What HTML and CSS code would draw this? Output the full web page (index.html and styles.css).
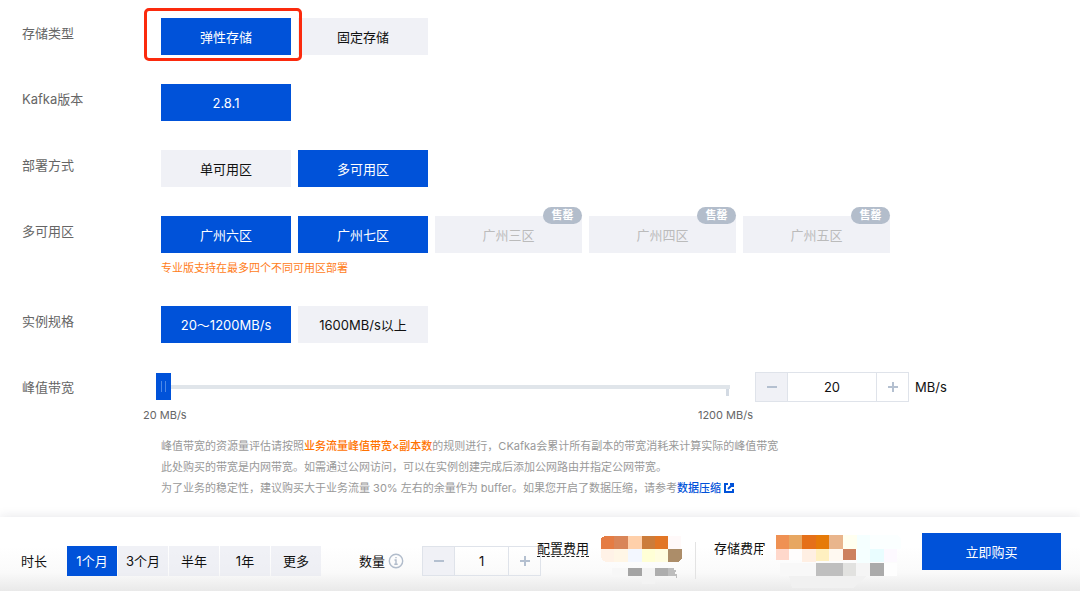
FILE: index.html
```html
<!DOCTYPE html>
<html lang="zh-CN">
<head>
<meta charset="utf-8">
<meta name="viewport" content="width=device-width, initial-scale=1">
<title>CKafka 购买</title>
<link rel="stylesheet" href="styles.css">
</head>
<body>
<main class="form">
  <section class="row">
    <h2 class="row-label">存储类型</h2>
    <div class="options">
      <button type="button" class="option selected highlighted">弹性存储</button>
      <button type="button" class="option">固定存储</button>
    </div>
  </section>
  <section class="row">
    <h2 class="row-label">Kafka版本</h2>
    <div class="options">
      <button type="button" class="option selected">2.8.1</button>
    </div>
  </section>
  <section class="row">
    <h2 class="row-label">部署方式</h2>
    <div class="options">
      <button type="button" class="option">单可用区</button>
      <button type="button" class="option selected">多可用区</button>
    </div>
  </section>
  <section class="row">
    <h2 class="row-label">多可用区</h2>
    <div>
      <div class="options">
        <button type="button" class="option selected">广州六区</button>
        <button type="button" class="option selected">广州七区</button>
        <button type="button" class="option soldout" disabled>广州三区<span class="badge">售罄</span></button>
        <button type="button" class="option soldout" disabled>广州四区<span class="badge">售罄</span></button>
        <button type="button" class="option soldout" disabled>广州五区<span class="badge">售罄</span></button>
      </div>
      <p class="hint">专业版支持在最多四个不同可用区部署</p>
    </div>
  </section>
  <section class="row">
    <h2 class="row-label">实例规格</h2>
    <div class="options">
      <button type="button" class="option selected">20～1200MB/s</button>
      <button type="button" class="option">1600MB/s以上</button>
    </div>
  </section>
  <section class="row">
    <label class="row-label" for="bandwidth">峰值带宽</label>
    <div>
      <div class="bandwidth">
        <div class="slider">
          <input id="bandwidth" class="range" type="range" min="20" max="1200" value="20">
          <div class="scale"><span>20 MB/s</span><span>1200 MB/s</span></div>
        </div>
        <div class="stepper">
          <button type="button" class="step off" aria-label="减少带宽"><svg width="12" height="12" viewBox="0 0 12 12"><path d="M1 6h10"/></svg></button>
          <input class="value" type="text" value="20" aria-label="峰值带宽">
          <button type="button" class="step" aria-label="增加带宽"><svg width="12" height="12" viewBox="0 0 12 12"><path d="M1 6h10M6 1v10"/></svg></button>
        </div>
        <span class="unit">MB/s</span>
      </div>
      <div class="notes">
        <p>峰值带宽的资源量评估请按照<strong>业务流量峰值带宽×副本数</strong>的规则进行，CKafka会累计所有副本的带宽消耗来计算实际的峰值带宽</p>
        <p>此处购买的带宽是内网带宽。如需通过公网访问，可以在实例创建完成后添加公网路由并指定公网带宽。</p>
        <p>为了业务的稳定性，建议购买大于业务流量 30% 左右的余量作为 buffer。如果您开启了数据压缩，请参考<a href="#">数据压缩<svg class="external" width="10" height="10" viewBox="0 0 10 10"><path d="M4 1H1v8h8V6M6 1h3v3M9 1L4 6"/></svg></a></p>
      </div>
    </div>
  </section>
</main>
<footer class="bar">
  <div class="group">
    <span class="bar-label">时长</span>
    <div class="periods">
      <button type="button" class="period selected">1个月</button>
      <button type="button" class="period">3个月</button>
      <button type="button" class="period">半年</button>
      <button type="button" class="period">1年</button>
      <button type="button" class="period">更多</button>
    </div>
  </div>
  <div class="group quantity">
    <label class="bar-label" for="count">数量</label>
    <svg class="info" width="16" height="16" viewBox="0 0 16 16"><circle cx="8" cy="8" r="6.7"/><path d="M6.5 7H8v4M6.3 11.2h3.4M7.3 4.6h1.4"/></svg>
    <div class="stepper small">
      <button type="button" class="step off" aria-label="减少数量"><svg width="12" height="12" viewBox="0 0 12 12"><path d="M1 6h10"/></svg></button>
      <input id="count" class="value" type="text" value="1">
      <button type="button" class="step" aria-label="增加数量"><svg width="12" height="12" viewBox="0 0 12 12"><path d="M1 6h10M6 1v10"/></svg></button>
    </div>
  </div>
  <div class="fee config">
    <span class="fee-label dashed">配置费用</span>
    <svg class="mosaic" width="84" height="50" viewBox="0 0 84 50" shape-rendering="crispEdges">
      <path fill="#e57c43" d="M1 14V6q0-5 5-5h8v13z"/>
      <path fill="#d98558" d="M14 1h14v13H14z"/>
      <path fill="#ffd0aa" d="M28 1h14v13H28z"/>
      <path fill="#cc7c3a" d="M42 1h13v13H42z"/>
      <path fill="#e27625" d="M55 1h13v13H55z"/>
      <path fill="#fff9f9" d="M68 1h13v13H68z"/>
      <path fill="#fff2e7" d="M1 14h13v13H6q-5-2-5-6z"/>
      <path fill="#fff6e6" d="M14 14h14v13H14z"/>
      <path fill="#f3f7ff" d="M28 14h14v13H28z"/>
      <path fill="#ffffd6" d="M42 14h13v13H42z"/>
      <path fill="#fffde0" d="M55 14h13v13H55z"/>
      <path fill="#ac8d69" d="M68 14h14v7q0 6-6 6h-8z"/>
      <path fill="#f7f7f7" d="M12 33h16v9H12z"/>
      <path fill="#f3f3f3" d="M42 33h13v16H42z"/>
      <path fill="#a4a4a4" d="M28 33h14v8H28z"/>
      <path fill="#adadad" d="M55 33h13v8H55z"/>
      <path fill="#bdbdbd" d="M68 33h6v2h2v2h-1v2h2v4h-1v-2h-8z"/>
    </svg>
  </div>
  <div class="fee storage">
    <span class="fee-label cut">存储费用</span>
    <svg class="mosaic" width="130" height="54" viewBox="0 0 130 54" shape-rendering="crispEdges">
      <path fill="#ef9153" d="M1 0h13v14H1z"/>
      <path fill="#e7a762" d="M14 0h13v14H14z"/>
      <path fill="#e57019" d="M27 0h14v14H27z"/>
      <path fill="#e67a08" d="M41 0h13v14H41z"/>
      <path fill="#e9b58c" d="M54 0h14v14H54z"/>
      <path fill="#fffff0" d="M68 0h14v14H68z"/>
      <path fill="#f5ffff" d="M82 0h13v28H82z"/>
      <path fill="#fbffff" d="M95 0h25q6 0 6 6v8H95z"/>
      <path fill="#ffd8cb" d="M1 14h13v11H1z"/>
      <path fill="#fffdfd" d="M14 14h13v11H14z"/>
      <path fill="#ffefe3" d="M27 14h14v13H27z"/>
      <path fill="#fff0c0" d="M41 14h13v12H41z"/>
      <path fill="#fff9f1" d="M54 14h14v12H54z"/>
      <path fill="#cd815f" d="M68 14h13v11H68z"/>
      <path fill="#e9fdff" d="M95 14h14v13H95z"/>
      <path fill="#fdf9ff" d="M109 14h13v13h-13z"/>
      <path fill="#f8f8f8" d="M5 28h36v13H5z"/>
      <path fill="#bfbfbf" d="M41 28h27v13H41z"/>
      <path fill="#e2e2e0" d="M68 28h13v13H68z"/>
      <path fill="#f5f5f5" d="M81 28h14v13H81z"/>
      <path fill="#f1f1f1" d="M14 41h78l-14 12H17z"/>
      <path fill="#ababab" d="M95 28h14v13H95z"/>
      <path fill="#fefefe" d="M109 28h13v13h-13z"/>
    </svg>
  </div>
  <button type="button" class="buy">立即购买</button>
</footer>
</body>
</html>
```
FILE: styles.css
```css
* {
  box-sizing: border-box;
}

body {
  margin: 0;
  min-height: 100vh;
  display: flex;
  flex-direction: column;
  background: #fff;
  color: #111;
  font: 13px/18px Inter, "Noto Sans CJK SC", sans-serif;
}

button,
input {
  margin: 0;
  padding: 0;
  border: 0;
  border-radius: 0;
  font: inherit;
  color: inherit;
}

h2,
p {
  margin: 0;
}

.form {
  flex: 1;
  display: flex;
  flex-direction: column;
  gap: 29px;
  padding: 18px 19px 17px 22px;
}

.row {
  display: grid;
  grid-template-columns: 139px 1fr;
}

.row-label {
  font-size: 13px;
  font-weight: 400;
  line-height: 30px;
  color: #666;
}

.options {
  display: flex;
  gap: 7px;
}

.option {
  position: relative;
  width: 130px;
  height: 37px;
  padding-top: 1px;
  background: #f0f1f6;
}

.selected {
  background: #0052d9;
  color: #fff;
}

.highlighted {
  z-index: 1;
}

.highlighted::after {
  content: "";
  position: absolute;
  inset: -10px -11px -6px -17px;
  border: 3px solid #fb2a0d;
  border-radius: 5px;
}

.soldout {
  width: 147px;
  color: #bbb;
}

.badge {
  position: absolute;
  top: -9px;
  right: 0;
  width: 39px;
  border-radius: 9px;
  background: #b3bdcb;
  color: #fff;
  font-size: 11px;
  font-weight: 700;
  line-height: 17px;
}

.hint {
  margin-top: 6px;
  font-size: 11px;
  color: #ff7d1a;
}

.bandwidth {
  display: flex;
  align-items: flex-start;
}

.slider {
  position: relative;
  flex: 0 1 574px;
  margin: 1px 25px 0 -5px;
}

.slider::after {
  content: "";
  position: absolute;
  top: 16px;
  right: 1px;
  width: 3px;
  height: 7px;
  background: #d3dae3;
}

.range {
  display: block;
  width: 100%;
  height: 27px;
  appearance: none;
  background: linear-gradient(#e0e5ea, #e0e5ea) center / 100% 4px no-repeat;
}

.range::-webkit-slider-thumb {
  appearance: none;
  width: 15px;
  height: 27px;
  background:
    linear-gradient(#4d88e6, #4d88e6) 5px 8px / 1px 11px no-repeat,
    linear-gradient(#4d88e6, #4d88e6) 9px 8px / 1px 11px no-repeat,
    #0052d9;
}

.scale {
  display: flex;
  justify-content: space-between;
  margin: 6px -23px 0 -13px;
  font-size: 11px;
  color: #666;
}

.stepper {
  display: flex;
  height: 30px;
  border: 1px solid #dfe3ea;
}

.step {
  width: 31px;
  display: flex;
  align-items: center;
  justify-content: center;
  background: transparent;
}

.step svg {
  fill: none;
  stroke: #b4c0d0;
  stroke-width: 2;
}

.off {
  background: #f0f1f6;
}

.value {
  width: 90px;
  border: solid #dfe3ea;
  border-width: 0 1px;
  background: transparent;
  text-align: center;
}

.small .value {
  width: 55px;
}

.unit {
  margin-left: 6px;
  line-height: 30px;
}

.notes {
  margin-top: 12px;
  font-size: 11px;
  line-height: 21px;
  color: #999;
}

.notes strong {
  font-weight: 500;
  color: #ff7200;
}

.notes a {
  color: #0052d9;
  font-weight: 500;
  text-decoration: none;
}

.external {
  margin-left: 3px;
  vertical-align: -1px;
  fill: none;
  stroke: currentColor;
  stroke-width: 2;
}

.bar {
  display: flex;
  align-items: flex-start;
  min-height: 74px;
  padding: 16px 19px 0 21px;
  background: linear-gradient(#fff 40%, #fafafa 75%, #e9e9e9);
  box-shadow: 0 -1px 10px rgba(30, 30, 60, 0.1);
}

.group {
  display: flex;
  align-items: center;
  padding-top: 13px;
}

.periods {
  display: flex;
  gap: 1px;
  margin-left: 20px;
}

.period {
  width: 50px;
  height: 30px;
}

.period:not(.selected) {
  background: rgba(225, 228, 237, 0.5);
}

.quantity {
  margin-left: 38px;
}

.quantity .stepper {
  margin-left: 18px;
}

.info {
  margin-left: 3px;
  fill: none;
  stroke: #b1bccb;
  stroke-width: 1.4;
}

.fee {
  display: flex;
  align-items: flex-start;
  padding-top: 2px;
}

.fee-label {
  position: relative;
  margin-top: 5px;
  line-height: 17px;
}

.config {
  margin-left: -4px;
}

.config .mosaic {
  margin-left: 11px;
}

.dashed {
  border-bottom: 1px dashed #222;
  line-height: 16px;
}

.storage {
  margin-left: 30px;
  position: relative;
}

.storage::before {
  content: "";
  position: absolute;
  left: -19px;
  top: 9px;
  width: 1px;
  height: 37px;
  background: #e3e3e3;
}

.storage .mosaic {
  margin-left: 9px;
}

.cut::after {
  content: "";
  position: absolute;
  right: 0;
  bottom: 0;
  width: 3px;
  height: 11px;
  background: #fff;
}

.buy {
  width: 139px;
  height: 37px;
  margin-left: auto;
  background: #0052d9;
  color: #fff;
}
```
